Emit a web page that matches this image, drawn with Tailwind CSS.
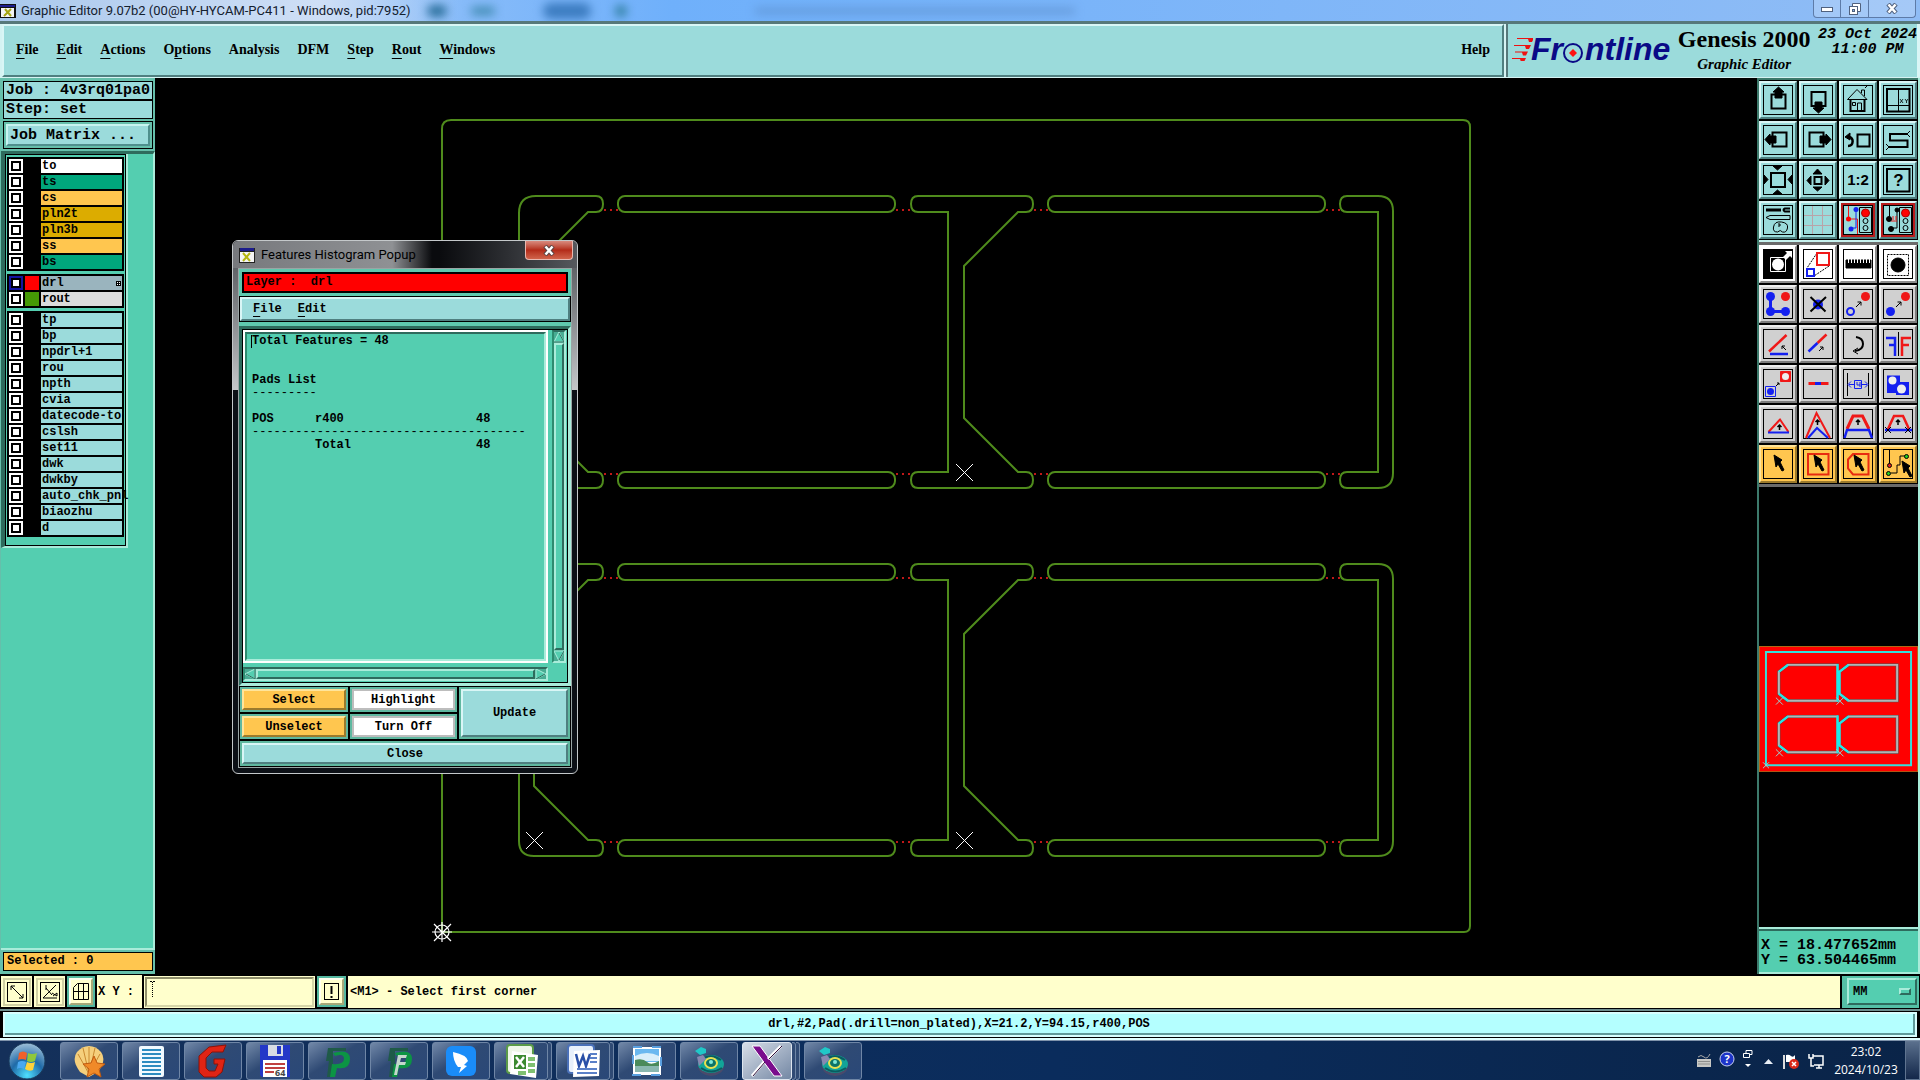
<!DOCTYPE html>
<html lang="en">
<head>
<meta charset="utf-8">
<title>Graphic Editor</title>
<script src="https://cdn.jsdelivr.net/npm/@tailwindcss/browser@4"></script>
</head>
<body class="flex h-screen min-h-[700px] flex-col overflow-hidden bg-black font-['Liberation_Mono',monospace] font-bold text-black">

<!-- Window title -->
<header class="flex h-[21px] shrink-0 items-center justify-between overflow-hidden bg-linear-to-r from-[#b9d2f2] via-[#6fb0fb] via-35% to-[#8fbcf5] pr-1">
  <div class="flex h-full items-center gap-[5px] bg-linear-to-r from-[#a9c8ec] via-[#cfdff6] via-70% to-transparent pr-12">
    <svg class="h-4 w-4" viewBox="0 0 16 16"><rect x="0" y="1" width="16" height="14" fill="#111"/><rect x="0" y="2" width="15" height="2" fill="#1c1c8c"/><rect x="1" y="5" width="13" height="9" fill="#f4f4f4"/><path d="M5 6l6 7M11 6l-7 7" stroke="#a5a512" stroke-width="2"/></svg>
    <h1 class="whitespace-nowrap font-['Roboto',sans-serif] text-[13px] font-normal leading-[20px] text-[#14202e]">Graphic Editor 9.07b2 (00@HY-HYCAM-PC411 - Windows, pid:7952)</h1>
  </div>
  <!-- Desktop showing through the glass -->
  <div class="-ml-8 flex h-full flex-1 items-center blur-[5px]">
    <span class="h-3 w-5 rounded-full bg-[#2a6f9c]"></span><span class="ml-6 h-2 w-6 rounded-full bg-[#3f8ab0]"></span><span class="ml-12 h-4 w-12 rounded-full bg-[#3c7cc0]"></span><span class="ml-6 h-3 w-3 rounded-full bg-[#2f7fa0]"></span><span class="ml-32 h-1 w-80 rounded-full bg-[#5a8cc8]"></span>
  </div>
  <div class="flex h-full items-start">
    <button aria-label="Minimize" class="flex h-[18px] w-7 items-center justify-center rounded-bl border border-t-0 border-[#5d7ba8] bg-white/20"><svg width="12" height="6"><rect x=".5" y="1.500" width="11" height="4" fill="#fff" stroke="#50617e"/></svg></button>
    <button aria-label="Restore" class="flex h-[18px] w-7 items-center justify-center border border-l-0 border-t-0 border-[#5d7ba8] bg-white/20"><svg width="12" height="12"><path d="M3.500 3V.500h8v8H9" fill="#fff" stroke="#50617e"/><rect x=".5" y="3.500" width="8" height="8" fill="#fff" stroke="#50617e"/><rect x="3.500" y="6.500" width="2" height="2" fill="#8fb5ea" stroke="#50617e"/></svg></button>
    <button aria-label="Close" class="flex h-[18px] w-[47px] items-center justify-center rounded-br border border-l-0 border-t-0 border-[#5d7ba8] bg-white/20"><svg width="12" height="11"><path d="M2 1l8 9M10 1l-8 9" stroke="#50617e" stroke-width="4.500"/><path d="M2.500 1.500l7 8M9.500 1.500l-7 8" stroke="#fff" stroke-width="2.500"/></svg></button>
  </div>
</header>

<!-- Menu bar and brand -->
<div class="flex h-[57px] shrink-0 border-t-[3px] border-[#56787a] bg-[#d5f3f3] pb-px">
  <nav class="ml-[2px] flex flex-1 items-center gap-[18px] border-2 border-b-[#4f7f80] border-l-[#d9f6f6] border-r-[#4f7f80] border-t-[#d9f6f6] bg-[#9bdbdb] px-3 pb-[2px] font-['Liberation_Serif',serif] text-[14px]">
    <button><span class="underline underline-offset-4">F</span>ile</button>
    <button><span class="underline underline-offset-4">E</span>dit</button>
    <button><span class="underline underline-offset-4">A</span>ctions</button>
    <button>O<span class="underline underline-offset-4">p</span>tions</button>
    <button>Analysis</button>
    <button>DFM</button>
    <button><span class="underline underline-offset-4">S</span>tep</button>
    <button><span class="underline underline-offset-4">R</span>out</button>
    <button><span class="underline underline-offset-4">W</span>indows</button>
    <button class="ml-auto">Help</button>
  </nav>
  <div class="ml-[2px] flex w-[414px] border-l-2 border-r-[3px] border-l-[#56787a] border-r-[#d9f6f6] bg-[#9bdbdb] pl-1">
    <div class="flex shrink-0 items-center pb-[3px] font-['Liberation_Sans',sans-serif] text-[32px] italic leading-[50px] text-[#0a0a86]">
      <svg class="h-6 w-[21px]" viewBox="0 0 21 24"><path d="M5 1h17l-2 4h-3l-1-3H5zM2 8h17l-2 4h-3l-1-3H2zM3 14.500h13l-2 4h-3l-1-3H3zM0 21h14l-2 4h-3l-1-3H0z" fill="#ee1111"/></svg><span class="-ml-[2px]">Fr</span>
      <svg class="mt-2 h-6 w-[22px]" viewBox="0 0 22 24"><circle cx="10" cy="12" r="9" fill="none" stroke="#0a0a86" stroke-width="2"/><path d="M10 8l4 4-4 4-4-4z" fill="#f11"/></svg><span>ntline</span>
    </div>
    <div class="flex flex-1 flex-col items-center whitespace-nowrap font-['Liberation_Serif',serif]">
      <div class="text-[24px] leading-[30px]">Genesis 2000</div>
      <div class="text-[15px] italic leading-[20px]">Graphic Editor</div>
    </div>
    <div class="flex shrink-0 flex-col items-center whitespace-nowrap pt-[3px] text-[15px] italic leading-[15px]"><span>23 Oct 2024</span><span>11:00 PM</span></div>
  </div>
</div>

<main class="flex min-h-0 flex-1">
  <!-- Layers -->
  <aside class="flex w-[155px] shrink-0 flex-col bg-[#66bfab] pl-px text-[12px]">
    <div class="px-[2px] pt-[3px] text-[15px]">
      <div class="h-[19px] whitespace-nowrap border border-black bg-[#9bdbdb] pl-[2px] leading-[18px]">Job : 4v3rq01pa0</div>
      <div class="h-[19px] border border-black bg-[#9bdbdb] pl-[2px] leading-[18px]">Step: set</div>
      <div class="mt-[2px] border border-black p-[2px]"><button class="block h-[22px] w-full border-2 border-b-[#4f8f8d] border-l-[#c8f4f0] border-r-[#4f8f8d] border-t-[#c8f4f0] bg-[#9bdbdb] pl-[2px] text-left leading-[17px]">Job Matrix ...</button></div>
    </div>
    <div class="mt-[2px] flex flex-1 items-start border-b-2 border-r-2 border-t-[3px] border-b-[#a9ecda] border-r-[#a9ecda] border-t-[#2e6b5d] bg-[#54ceb0]">
      <div class="border-b-2 border-l-[4px] border-r-2 border-b-[#a9ecda] border-l-[#2e6b5d] border-r-[#a9ecda]">
        <div id="layers" class="flex h-[392px] w-[121px] flex-col gap-[3px] border border-black bg-[#54ceb0] p-px pt-[2px]"></div>
      </div>
    </div>
    <div class="px-[2px] pb-[3px] pt-[2px]"><output class="block h-[19px] border border-black bg-[#ffc64f] pl-[3px] leading-[17px]">Selected : 0</output></div>
  </aside>

  <!-- Board view -->
  <section class="relative min-w-0 flex-1 bg-black">
    <svg id="board" class="absolute inset-0 h-full w-full" viewBox="155 78 1602 896" fill="none" stroke="#4f8b1c" stroke-width="2" shape-rendering="geometricPrecision">
      <path d="M442 932V129Q442 120 451 120H1463Q1470 120 1470 127V926Q1470 932 1464 932Z"/>
      <defs>
        <g id="panel">
          <path d="M588 212H596Q603 212 603 204T596 196H536Q519 196 519 213V473Q519 488 534 488H596Q603 488 603 480T596 472H588L534 418V266Z"/>
          <rect x="618" y="196" width="277" height="16" rx="7"/><rect x="618" y="472" width="277" height="16" rx="7"/>
          <rect x="1048" y="196" width="277" height="16" rx="7"/><rect x="1048" y="472" width="277" height="16" rx="7"/>
          <path d="M948 212H918Q911 212 911 204T918 196H1026Q1033 196 1033 204T1026 212H1018L964 266V418L1018 472H1026Q1033 472 1033 480T1026 488H918Q911 488 911 480T918 472H948Z"/>
          <path d="M1378 212H1347Q1340 212 1340 204T1347 196H1378Q1393 196 1393 211V473Q1393 488 1378 488H1347Q1340 488 1340 480T1347 472H1378Z"/>
          <path stroke="#c01818" stroke-dasharray="2 4" d="M604 210h14M896 210h14M1034 210h14M1326 210h14M604 474h14M896 474h14M1034 474h14M1326 474h14"/>
          <path stroke="#fff" stroke-width="1" d="M526 464l17 17M543 464l-17 17M956 464l17 17M973 464l-17 17"/>
        </g>
      </defs>
      <use href="#panel"/><use href="#panel" y="368"/>
      <g stroke="#fff" stroke-width="1.200"><circle cx="442" cy="932" r="7"/><path d="M432 932h20M442 922v20M434 924l17 17M451 924l-17 17"/></g>
    </svg>

    <!-- Features histogram window -->
    <div class="absolute left-[77px] top-[162px] w-[346px] rounded-[6px] border border-[#c4c8ca] bg-linear-to-b from-[#4c4f54] via-[#c4c6c8] via-28% to-[#0c1016] to-28% px-[5px] pb-[5px] text-[12px]">
      <div class="-mx-[5px] flex h-[27px] items-start rounded-t-[5px] bg-linear-to-r from-[#0a0b0e] via-[#0a0b0e] via-60% to-[#56595e] pr-1">
        <div class="flex h-full items-start rounded-tl-[5px] bg-linear-to-r from-[#77797d] via-[#8f9194] via-80% to-transparent pl-[6px] pr-4">
          <svg class="mt-[7px] h-[15px] w-4" viewBox="0 0 16 15"><rect width="16" height="15" fill="#222"/><rect x="1" width="14" height="3" fill="#1c1c8c"/><rect x="1" y="4" width="14" height="10" fill="#f4f4f4"/><path d="M4 5l7 8M11 5l-7 8" stroke="#b5b512" stroke-width="2"/></svg>
          <h2 class="ml-[6px] mt-[4px] font-['Roboto',sans-serif] text-[13px] font-normal leading-[20px]">Features Histogram Popup</h2>
        </div>
        <button aria-label="Close window" class="ml-auto flex h-[19px] w-[48px] items-center justify-center rounded-b-[4px] border border-t-0 border-[#e8b8b0] bg-linear-to-b from-[#d88a7e] via-[#b32a18] via-50% to-[#d0624a]"><svg width="12" height="11"><path d="M2 1l8 9M10 1l-8 9" stroke="#5a4444" stroke-width="4.500"/><path d="M2.500 1.500l7 8M9.500 1.500l-7 8" stroke="#fff" stroke-width="2.500"/></svg></button>
      </div>
      <div class="border border-[#9aa5a5] bg-black">
        <div class="bg-[#5fc8ae] p-[3px]"><div class="h-[21px] whitespace-pre border-2 border-black bg-[#ff0000] pl-[2px] leading-[17px]">Layer :  drl</div></div>
        <nav class="border border-black"><div class="flex h-6 items-center gap-4 border-2 border-b-[#4f7f80] border-l-[#d9f6f6] border-r-[#4f7f80] border-t-[#d9f6f6] bg-[#9bdbdb] px-[11px]"><button><span class="underline underline-offset-4">F</span>ile</button><button><span class="underline underline-offset-4">E</span>dit</button></div></nav>
        <div class="border-t-[4px] border-[#5fc8ae]">
        <div class="border-[3px] border-b-[#a9ecda] border-l-[#2e6b5d] border-r-[#a9ecda] border-t-[#2e6b5d]">
          <div class="grid grid-cols-[1fr_14px] gap-x-1 gap-y-1 border border-black bg-[#54ceb0] pr-px pb-px">
            <div class="h-[333px] border-2 border-white"><div class="h-full border-2 border-b-[#a9ecda] border-l-[#2e8b70] border-r-[#a9ecda] border-t-[#2e6b5d] pl-[5px] pt-px leading-[13px]">
              <div class="-ml-px border-l border-black">Total Features = 48</div>
              <h3 class="mt-[26px] text-[12px] font-bold">Pads List</h3>
              <div class="font-normal">---------</div>
              <table class="mt-[13px] table-fixed border-collapse">
                <colgroup><col class="w-[63px]"><col class="w-[161px]"><col class="w-[60px]"></colgroup>
                <tbody><tr><td>POS</td><td>r400</td><td>48</td></tr>
                <tr><td colspan="3" class="font-normal">--------------------------------------</td></tr>
                <tr><td></td><td>Total</td><td>48</td></tr></tbody>
              </table>
            </div></div>
            <div class="flex flex-col border-2 border-b-[#a9ecda] border-l-[#2e8b70] border-r-[#a9ecda] border-t-[#2e6b5d] bg-[#48ac93]">
              <svg class="h-[11px] w-[10px]" viewBox="0 0 10 11"><path d="M5 0L0 10h10z" fill="#54ceb0" stroke="#a9ecda"/><path d="M0 10h10L5 1" fill="none" stroke="#2e6b5d"/></svg>
              <div class="flex-1 border-2 border-b-[#2e6b5d] border-l-[#a9ecda] border-r-[#2e6b5d] border-t-[#a9ecda] bg-[#54ceb0]"></div>
              <svg class="h-[11px] w-[10px]" viewBox="0 0 10 11"><path d="M5 11L0 1h10z" fill="#54ceb0" stroke="#a9ecda"/><path d="M10 1L5 10" fill="none" stroke="#2e6b5d"/></svg>
            </div>
            <div class="flex h-[14px] border-2 border-b-[#a9ecda] border-l-[#2e8b70] border-r-[#a9ecda] border-t-[#2e6b5d] bg-[#48ac93]">
              <svg class="h-[10px] w-[11px]" viewBox="0 0 11 10"><path d="M0 5L10 0v10z" fill="#54ceb0" stroke="#a9ecda"/><path d="M10 0v10L1 5" fill="none" stroke="#2e6b5d"/></svg>
              <div class="flex-1 border-2 border-b-[#2e6b5d] border-l-[#a9ecda] border-r-[#2e6b5d] border-t-[#a9ecda] bg-[#54ceb0]"></div>
              <svg class="h-[10px] w-[11px]" viewBox="0 0 11 10"><path d="M11 5L1 0v10z" fill="#54ceb0" stroke="#a9ecda"/><path d="M1 10l9-5" fill="none" stroke="#2e6b5d"/></svg>
            </div>
          </div>
        </div>
        </div>
        <div class="grid grid-cols-[108px_107px_1fr] gap-[2px] border border-black leading-[18px]">
          <div class="bg-[#5fb8a0] p-[2px]"><button class="block h-[21px] w-full border-2 border-b-[#9c7a2c] border-l-[#ffe49a] border-r-[#9c7a2c] border-t-[#ffe49a] bg-[#ffc64f]">Select</button></div>
          <div class="bg-[#5fb8a0] p-[2px]"><button class="block h-[21px] w-full border-2 border-[#bdbdbd] bg-white">Highlight</button></div>
          <div class="row-span-2 bg-[#5fb8a0] p-[2px]"><button class="block h-full w-full border-2 border-b-[#4f7f80] border-l-[#d9f6f6] border-r-[#4f7f80] border-t-[#d9f6f6] bg-[#9bdbdb]">Update</button></div>
          <div class="bg-[#5fb8a0] p-[2px]"><button class="block h-[21px] w-full border-2 border-b-[#9c7a2c] border-l-[#ffe49a] border-r-[#9c7a2c] border-t-[#ffe49a] bg-[#ffc64f]">Unselect</button></div>
          <div class="bg-[#5fb8a0] p-[2px]"><button class="block h-[21px] w-full border-2 border-[#bdbdbd] bg-white">Turn Off</button></div>
          <div class="col-span-3 bg-[#5fb8a0] p-[2px]"><button class="block h-[21px] w-full border-2 border-b-[#4f7f80] border-l-[#d9f6f6] border-r-[#4f7f80] border-t-[#d9f6f6] bg-[#9bdbdb]">Close</button></div>
        </div>
      </div>
    </div>
  </section>

  <!-- Tools -->
  <aside class="flex w-[163px] shrink-0 flex-col border-l-2 border-r-2 border-l-[#3d7a6c] border-r-[#a9ecda]">
    <div class="border-b-2 border-t-2 border-b-[#c6f2ee] border-t-[#3d7a6c] pb-px"><div id="view-tools" class="grid grid-cols-[repeat(4,38px)] gap-[2px] pt-px"></div></div>
    <div class="border-b-[3px] border-t-[3px] border-[#6b6b6b] pb-px"><div id="edit-tools" class="grid grid-cols-[repeat(4,38px)] gap-[2px]"></div></div>
    <div class="flex flex-1 items-center border-b-2 border-[#a9ecda] bg-black">
      <svg class="-mb-[4px] w-full" viewBox="0 0 160 127" fill="none">
        <rect x=".5" y=".5" width="159" height="126" fill="#f00" stroke="#b06a18"/>
        <path d="M7 6h146v114H7z" stroke="#35e0dc" stroke-width="2"/>
        <defs><g id="mini"><path d="M29 19h50v36H29l-9-7V26zM90 19h49v36H90l-9-7V26z" stroke="#4a5a5a" stroke-width="3"/><path d="M29 19h50v36H29l-9-7V26zM90 19h49v36H90l-9-7V26z" stroke="#b4b4b4" stroke-width="2"/><path d="M79 18v38M81 25v24M20 26l9-7M81 26l9-7M20 48l9 7M81 48l9 7" stroke="#20e8e8" stroke-width="2"/><path d="M17 52l7 7M24 52l-7 7M78 52l7 7M85 52l-7 7" stroke="#9ad0d0"/></g></defs>
        <use href="#mini"/><use href="#mini" y="52"/><path d="M4 117l6 6M10 117l-6 6" stroke="#9ad0d0"/>
      </svg>
    </div>
    <div class="flex h-[45px] flex-col justify-center whitespace-pre border-b-2 border-t-2 border-b-[#a9ecda] border-t-[#2e6b5d] bg-[#54ceb0] pl-[2px] pt-[2px] text-[15px] leading-[15px]"><span>X = 18.477652mm</span><span>Y = 63.504465mm</span></div>
  </aside>
</main>

<!-- Command line -->
<div class="flex h-[35px] shrink-0 items-center gap-[2px] px-px text-[12px]">
  <button aria-label="Absolute" class="flex h-[31px] w-[31px] items-center justify-center bg-[#ffffcc]"><svg class="border-2 border-[#d0d0a4]" width="28" height="28" viewBox="0 0 24 24" fill="none" stroke="#000"><rect x="2.500" y="2.500" width="19" height="19"/><path d="M6 6l12 12M6 10V6h4M18 14v4h-4"/></svg></button>
  <button aria-label="Angle" class="flex h-[31px] w-[31px] items-center justify-center bg-[#ffffcc]"><svg class="border-2 border-[#d0d0a4]" width="28" height="28" viewBox="0 0 24 24" fill="none" stroke="#000"><rect x="2.500" y="2.500" width="19" height="19"/><path d="M5 18L18 5M5 18h14M8 8l6 7M8 5v5M14 13l5 3v-3l-4 3"/></svg></button>
  <button aria-label="Snap grid" class="flex h-[31px] w-[28px] items-center justify-center bg-[#54b8a0]"><svg class="border-2 border-b-[#a8a878] border-l-[#fffff0] border-r-[#a8a878] border-t-[#fffff0] bg-[#ffffcc]" width="24" height="27" viewBox="0 0 20 23" fill="none" stroke="#000"><path d="M2.500 7.500l4-4h11v16h-15zM2 11.500h16M7.500 3v16M12.500 3v16"/></svg></button>
  <label for="xy" class="flex h-[33px] w-[45px] items-center whitespace-nowrap bg-[#ffffcc] pl-px">X Y :</label>
  <div class="relative h-[32px] w-[171px] bg-[#ffffcc] p-px">
    <input id="xy" class="h-full w-full border-2 border-b-[#d6d6a8] border-l-[#8e8e6a] border-r-[#d6d6a8] border-t-[#8e8e6a] bg-[#ffffcc] px-1">
    <svg class="absolute left-[6px] top-[5px]" width="5" height="16" fill="none" stroke="#000"><path d="M2.500 1v15" stroke-dasharray="1 1"/><path d="M0 .5h2M3 .5h2"/></svg>
  </div>
  <button aria-label="Alert" class="flex h-[31px] w-[29px] items-center justify-center bg-[#54b8a0]"><svg class="border-2 border-b-[#a8a878] border-l-[#fffff0] border-r-[#a8a878] border-t-[#fffff0] bg-[#ffffcc]" width="25" height="27" viewBox="0 0 21 23" fill="none" stroke="#000"><rect x="3.500" y="3.500" width="14" height="16"/><path d="M10.500 6v8M10.500 16v2" stroke-width="2"/></svg></button>
  <output class="flex h-[32px] flex-1 items-center bg-[#ffffcc] pl-[2px]">&lt;M1&gt; - Select first corner</output>
  <div class="flex h-[32px] w-[77px] items-center bg-[#54c0a6] pl-[5px]">
    <button aria-haspopup="listbox" class="flex h-[27px] w-[70px] items-center justify-between border-2 border-b-[#2e6b5d] border-l-[#a9ecda] border-r-[#2e6b5d] border-t-[#a9ecda] bg-[#54ceb0] pl-1 pr-1">MM<span class="h-[7px] w-3 border-2 border-b-[#2e6b5d] border-l-[#a9ecda] border-r-[#2e6b5d] border-t-[#a9ecda]"></span></button>
  </div>
</div>
<div class="h-[31px] shrink-0 border-b-2 border-t-2 border-b-[#e0ffff] border-t-[#6f8f8f] px-[2px]">
  <div class="h-full border border-black bg-[#d8ffff] p-[2px]"><output class="flex h-full items-center justify-center border-b-2 border-r-2 border-[#5f9a9a] bg-[#b4ffff] pt-px text-[12px] leading-none">drl,#2,Pad(.drill=non_plated),X=21.2,Y=94.15,r400,POS</output></div>
</div>

<!-- Taskbar -->
<footer class="flex h-[40px] shrink-0 items-center border-t border-[#7f93ab] bg-linear-to-r from-[#14305a] via-[#0a2c5c] via-55% to-[#0a2448] font-['Open_Sans',sans-serif] font-normal text-white">
  <button aria-label="Start" class="ml-[8px] mr-[14px] shrink-0"><svg width="38" height="38" viewBox="0 0 38 38"><defs><radialGradient id="orb" cx=".5" cy=".9" r=".9"><stop offset="0" stop-color="#4fe0ff"/><stop offset=".5" stop-color="#1f6aa8"/><stop offset="1" stop-color="#9fc0d8"/></radialGradient></defs><circle cx="19" cy="19" r="18" fill="url(#orb)" stroke="#1a3a5a"/><path d="M11 11q4-3 8 0l-1 7q-4-2-8 0z" fill="#f0602a"/><path d="M20 11q4 2 9 0l-2 8q-4 2-8 0z" fill="#8fc83a"/><path d="M10 20q4-2 8 0l-2 7q-4-2-7 0z" fill="#4aa8f0"/><path d="M19 20q4 2 8 0l-2 8q-4 2-8-1z" fill="#ffd23a"/></svg></button>
  <div id="tasks" class="flex gap-1"></div>
  <div class="ml-auto flex items-center gap-[7px]">
    <svg width="16" height="16" viewBox="0 0 16 16"><rect x="1" y="6" width="14" height="8" fill="#c8c8c4"/><path d="M2.500 8.500h11M2.500 11h11" stroke="#555" stroke-dasharray="1 1"/><path d="M2 4q3-3 6 0t6-3" stroke="#aaa" fill="none"/></svg>
    <svg class="-mt-1" width="16" height="16" viewBox="0 0 16 16"><circle cx="8" cy="8" r="7" fill="#1c34c8" stroke="#c8d0f0"/><text x="8" y="12" text-anchor="middle" font-size="11" font-weight="700" fill="#fff">?</text></svg>
    <svg class="-mt-1" width="12" height="20" viewBox="0 0 12 20" fill="none" stroke="#fff"><path d="M4 4V1.500h6v4H8M1.500 4.500h6v4h-6z"/><path d="M3 15h6l-3 3z" fill="#fff" stroke="none"/></svg>
    <svg width="14" height="16" viewBox="-1 0 14 16"><path d="M2 11h9L6.500 6z" fill="#e8eef6"/></svg>
    <svg width="18" height="18" viewBox="0 0 18 18"><path d="M2 3v14" stroke="#ddd" stroke-width="2"/><path d="M4 3q3-1 5 1t4-1v7H4z" fill="#fff"/><circle cx="12" cy="12" r="5" fill="#d82818"/><path d="M10 10l4 4M14 10l-4 4" stroke="#fff" stroke-width="1.500"/></svg>
    <svg width="18" height="18" viewBox="0 0 18 18" fill="none" stroke="#fff" stroke-width="1.500"><path d="M6 4h10v9H7M9 16h6M12 13v3M2 2v4h4V2M4 6v8h3"/></svg>
    <div class="flex w-[68px] flex-col items-center whitespace-nowrap text-[12px] leading-[18px]"><span>23:02</span><span>2024/10/23</span></div>
    <button aria-label="Show desktop" class="-ml-[2px] h-[39px] w-[15px] border border-[#5f7490] bg-linear-to-b from-[#5a6f8c] to-[#14284a]"></button>
  </div>
</footer>

<script>
// Layer groups: [name, label colour class, swatch colour class, checkbox colour class]
const W = 'bg-white', G = 'bg-[#00a67c]', O = 'bg-[#ffc64f]', D = 'bg-[#dcac00]', C = 'bg-[#9bdbdb]', K = 'bg-black';
const groups = [
  [['to', W], ['ts', G], ['cs', O], ['pln2t', D], ['pln3b', D], ['ss', O], ['bs', G]],
  [['drl', 'bg-[#9ab4be]', 'bg-[#ff0000]', 'bg-[#1414a0]'], ['rout', 'bg-[#dcdcdc]', 'bg-[#459a05]']],
  ['tp', 'bp', 'npdrl+1', 'rou', 'npth', 'cvia', 'datecode-to', 'cslsh', 'set11', 'dwk', 'dwkby', 'auto_chk_pnl', 'biaozhu', 'd'].map(n => [n, C])
];
document.getElementById('layers').innerHTML = groups.map(g =>
  '<div class="flex flex-col gap-[2px] bg-black p-[2px]">' + g.map(([n, c, s = K, b = W]) =>
    `<div class="flex h-[14px] gap-[2px]">
      <label class="flex w-[14px] shrink-0 items-center justify-center ${b}"><input type="checkbox" aria-label="${n}" class="h-[10px] w-[10px] appearance-none border-2 border-black bg-white"></label>
      <span class="w-[14px] shrink-0 ${s}"></span>
      <button class="flex min-w-0 flex-1 items-center whitespace-nowrap pl-px leading-[14px] ${c}">${n}${n === 'drl' ? '<svg class="ml-auto mr-px" width="5" height="5" shape-rendering="crispEdges"><path d="M0 0h5v5H0z"/><path d="M1 1h1v1H1zM3 1h1v1H3zM1 3h1v1H1zM3 3h1v1H3z" fill="#fff"/></svg>' : ''}</button>
    </div>`).join('') + '</div>').join('');

// Tool icons, drawn in a 30 x 30 frame
const R = '#f01818', B = '#1420f0';
const cursor = (x, y) => `<path transform="translate(${x} ${y})" d="M0 0l8 5-2 2 4 8-2 1-4-7-2 3z" fill="#000"/>`;
const light = '<path d="M16.500 2.500h12v25h-12z"/><circle cx="22.500" cy="8" r="4" fill="#f00" stroke="#a00"/><circle cx="22.500" cy="16" r="2.500"/><circle cx="22.500" cy="23" r="2.500"/>';
const ne = (x, y) => `<path d="M${x} ${y}l5-5m-3.500 0h3.500v3.500"/>`;
const up = (x, y) => `<path d="M${x} ${y}v-5m-2 2l2-2 2 2" stroke-width="1.500"/>`;
const view = [
  ['Pan up', '<path d="M8.500 9.500h14v14h-14z" stroke-width="2"/><path d="M15.500 2l5.500 5h-2v6h-7V7h-2z" fill="#000"/>'],
  ['Pan down', '<path d="M8.500 7h14v14h-14z" stroke-width="2"/><path d="M15.500 28l5.500-5h-2v-6h-7v6h-2z" fill="#000"/>'],
  ['Home', '<path d="M7.500 14v12h14V14" stroke-width="2"/><path d="M4.500 14.500L14 4.500l10 10zM9.500 17.500h3v3h-3zM14.500 26v-8h4v8M18.500 8V5h3v6M22 3l2-2"/>'],
  ['Window XY', '<path d="M4 4h22.500v22.500H4z" stroke-width="2"/><path d="M15.500 4v22M4 20.500h22"/><path d="M17 14l3 4M20 14l-3 4M22 14l1.500 2 1.500-2M23.500 16v2" stroke-width=".8"/>'],
  ['Pan left', '<path d="M9.500 7.500h14v14h-14z" stroke-width="2"/><path d="M2 14.500l5-5.500v2h6v7H7v2z" fill="#000"/>'],
  ['Pan right', '<path d="M6.500 7.500h14v14h-14z" stroke-width="2"/><path d="M28 14.500L23 9v2h-6v7h6v2z" fill="#000"/>'],
  ['Previous view', '<path d="M14.500 9.500h12v12h-12z" stroke-width="2"/><path d="M5 21c6 0 6-9 1-9" stroke-width="2.500"/><path d="M2 12l5-4v7z" fill="#000"/>'],
  ['Serpentine', '<path d="M24 9H7v6.500h17.500V22H6" stroke-width="2"/><path d="M24 9l3-3M24 9l3 3M6 22l-3-3M6 22l-3 3"/>'],
  ['Zoom in', '<path d="M8 8h14v14H8z" stroke-width="2"/><path d="M10 1h9l-4.500 4zM10 29h9l-4.500-4zM1 10v9l4-4.500zM29 10v9l-4-4.500z" fill="#000"/>'],
  ['Zoom out', '<path d="M11.500 12h7v7h-7z" stroke-width="2"/><path d="M10 9h9l-4.500-5zM10 22h9l-4.500 4zM8 11v9l-4-4.500zM22 11v9l4-4.500z" fill="#000"/>'],
  ['Scale', '<text x="15" y="20" text-anchor="middle" font-size="15" fill="#000" stroke="none" font-family="Liberation Sans, sans-serif" font-weight="700">1:2</text>'],
  ['Query', '<path d="M4 4h22.500v22.500H4z" stroke-width="2"/><text x="15.500" y="21" text-anchor="middle" font-size="17" fill="#000" stroke="none" font-family="Liberation Sans, sans-serif" font-weight="700">?</text>'],
  ['Options', '<path d="M3 5h15" stroke-width="3"/><path d="M27 3.500h-5q-3 1.500 0 3h5" stroke-width="2"/><path d="M3 12.500l4-2h20v4H7zM10.500 22q1-6 8-5t6 6-5 4q-2-3-5 0-5 0-4-5zM15 19h2v2h-2"/>'],
  ['Grid', '<path d="M9.500 1v28M19.500 1v28M1 10.500h28M1 20.500h28" stroke="#b9a3a8"/>'],
  ['Stop shorts', light + `<path d="M5.500 1v13h9v15" stroke="#f01818"/><path d="M13 4v19H9" stroke="#1420f0"/><circle cx="5.500" cy="14" r="2.500" fill="#f00" stroke="none"/><circle cx="13" cy="4.500" r="2.500" fill="#1420f0" stroke="none"/><circle cx="8" cy="24" r="2.500" fill="#1420f0" stroke="none"/>`, 1],
  ['Stop spacing', light + '<path d="M6.500 1v13M14 5v18H8"/><path d="M8 16h6M10 11v4M13 11v4" stroke="#f01818"/><circle cx="6" cy="14" r="2.500" fill="#000"/><circle cx="14" cy="5" r="2" fill="#000"/><circle cx="8" cy="24" r="2.500" fill="#000"/>', 1]
];
const edit = [
  ['Export feature', '<path d="M0 0h30v30H0z" fill="#000"/><path d="M7.500 8.500h15v14h-15zM22 8l5-5" stroke="#fff"/><circle cx="15" cy="15.500" r="6" fill="#fff" stroke="none"/><path d="M20 8l4-4-2-2h7v7l-2-2-4 4z" fill="#fff" stroke="none"/>'],
  ['Resize', `<path d="M14 4L4 19M26 17l-15 10" stroke-dasharray="2 1"/><path d="M14 4h12v12H14z" stroke="${R}" stroke-width="2"/><path d="M4 20h7v7H4z" stroke="${B}" stroke-width="2"/>`],
  ['Measure', '<path d="M3 11h25v8H3z" fill="#000"/><path d="M5.500 10v4M8.500 10v4M11.500 10v4M14.500 10v4M17.500 10v4M20.500 10v4M23.500 10v4M26.500 10v4" stroke="#fff"/>'],
  ['Select feature', '<path d="M4.500 5.500h21v21h-21z" stroke-dasharray="2 1"/><circle cx="15" cy="16" r="7" fill="#000"/>'],
  ['Connect', `<path d="M7.500 7.500v15h15" stroke="${B}" stroke-width="3"/><g fill="${B}" stroke="none"><circle cx="7.500" cy="7.500" r="4.500"/><circle cx="7.500" cy="22.500" r="4.500"/><circle cx="22.500" cy="22.500" r="4.500"/><circle cx="22.500" cy="7.500" r="4.500" fill="${R}"/></g>`],
  ['Delete', `<circle cx="15" cy="15.500" r="5" fill="${B}" stroke="none"/><path d="M7.500 8l15 14.500M23 8L7.500 22.500" stroke-width="2"/>`],
  ['Copy', `<circle cx="7.500" cy="22.500" r="3.500" stroke="${B}" stroke-width="2"/><circle cx="22.500" cy="7.500" r="4.500" fill="${R}" stroke="none"/>` + ne(13, 18)],
  ['Move', `<circle cx="7.500" cy="22.500" r="4.500" fill="${B}" stroke="none"/><circle cx="22.500" cy="7.500" r="4.500" fill="${R}" stroke="none"/>` + ne(13, 18)],
  ['Rotate line', `<path d="M6 22.500L23.500 6" stroke="${R}" stroke-width="2.500"/><path d="M7 25h18" stroke="${B}" stroke-width="2.500"/><path d="M23 21l-4-4m0 3v-3h3"/>`],
  ['Stretch line', `<path d="M14.500 14L23.500 5.500" stroke="${R}" stroke-width="2.500"/><path d="M5.500 22.500l9-8.500" stroke="${B}" stroke-width="2.500"/><path d="M16 22l4-4m-3 0h3v3"/>`],
  ['Rotate', '<path d="M13 8q7 1 7 7t-8 7" stroke-width="2"/><path d="M15 19l-5 3 5 3"/>'],
  ['Mirror', `<path d="M15.500 3v24"/><path d="M12 27V9H3M12 16H6" stroke="${B}" stroke-width="2.500"/><path d="M19 27V9h9M19 16h7" stroke="${R}" stroke-width="2.500"/>`],
  ['Change symbol', `<path d="M17.500 2.500h10v10h-10z" fill="${R}" stroke="${R}"/><circle cx="22.500" cy="7.500" r="3.500" fill="#eee" stroke="none"/><path d="M2.500 17.500h10v10h-10z" stroke="${B}"/><circle cx="7.500" cy="22.500" r="3.500" fill="${B}" stroke="none"/><path d="M13 17l3-3m-2 0h2v2"/>`],
  ['Break line', `<path d="M5.500 14.500h20" stroke="${R}" stroke-width="3"/><path d="M12 14.500h6" stroke="${B}" stroke-width="3"/>`],
  ['Spacing', `<path d="M4.500 4v23M25.500 4v23"/><g stroke="${B}"><path d="M11.500 11.500h7v8h-7zM11 15.500H6m2-3l-3 3 3 3M19 15.500h5m-2-3l3 3-3 3M14 13v3h3m0-3v5"/></g>`],
  ['Merge', `<path d="M4 6.500h13v6.500h9v13H13v-2H4z" fill="${B}" stroke="none"/><circle cx="9.500" cy="11.500" r="4" fill="#eee" stroke="none"/><circle cx="18.500" cy="20" r="4.500" fill="#eee" stroke="none"/>`],
  ['Triangle corner', `<path d="M5.500 23l11.500-12.500L25.500 23" stroke="${R}" stroke-width="2"/><path d="M5 23.500h21" stroke="${B}" stroke-width="2"/>` + up(16.5, 21)],
  ['Peak corner', `<path d="M3 29L13.500 4 27 29" stroke="${R}" stroke-width="2"/><path d="M5 29l9-10 11 10" stroke="${B}" stroke-width="2"/>` + up(14.5, 16)],
  ['Trapezoid', `<path d="M4 20L10 7h9.500L26 20" stroke="${R}" stroke-width="3"/><path d="M1.500 29L4 21h22l3 8" stroke="${B}" stroke-width="2.500"/>` + up(15, 16)],
  ['Flat trapezoid', `<path d="M5 20l6-13h9l6 13" stroke="${R}" stroke-width="2.500"/><path d="M2 21h27" stroke="${B}" stroke-width="2.500"/><path d="M2 18l6 6M8 18l-6 6M22 18l6 6M28 18l-6 6"/>` + up(15, 16)],
  ['Pick', cursor(11, 6)],
  ['Pick in rectangle', '<path d="M5 5h20.500v20.500H5z" stroke="#e82a10" stroke-width="2"/>' + cursor(11, 6)],
  ['Pick in polygon', '<path d="M10 5h15.500v20.500H10l-5-6v-9z" stroke="#e82a10" stroke-width="2"/>' + cursor(11, 6)],
  ['Pick net', '<path d="M6.500 1v15M8 24h6v-8h3V7h7"/><circle cx="6.500" cy="16.500" r="2" fill="#d22"/><circle cx="5.500" cy="24.500" r="2" fill="#2c2"/><circle cx="23.500" cy="7.500" r="2" fill="#2c2"/>' + cursor(19, 12)]
];
const tool = ([name, art, stop], cls) =>
  `<button aria-label="${name}" class="h-[38px] w-[38px] border-2 p-[2px] ${cls}"><svg class="${stop ? 'block bg-[#9bdbdb] outline-2 outline-[#b81c1c]' : 'block'}" width="30" height="30" viewBox="0 0 30 30" fill="none" stroke="#000"><rect x=".5" y=".5" width="29" height="29"/>${art}</svg></button>`;
const teal = 'border-t-[#d9f6f6] border-l-[#d9f6f6] border-b-[#4f7f80] border-r-[#4f7f80] bg-[#9bdbdb]';
const white = 'border-t-white border-l-white border-b-[#8c8c8c] border-r-[#8c8c8c] bg-white';
const grey = 'border-t-[#eeeeee] border-l-[#eeeeee] border-b-[#7c7c7c] border-r-[#7c7c7c] bg-[#d0d0d0]';
const orange = 'border-t-[#ffe49a] border-l-[#ffe49a] border-b-[#9c7a2c] border-r-[#9c7a2c] bg-[#ffc64f]';
document.getElementById('view-tools').innerHTML = view.map(t => tool(t, teal)).join('');
document.getElementById('edit-tools').innerHTML = edit.map((t, i) => tool(t, i < 4 ? white : i < 20 ? grey : orange)).join('');

// Taskbar programs, drawn in a 34 x 34 box: [name, art, active, number of stacked windows behind]
const pIcon = '<path d="M8 4h18v3H13v26H7l2-16H6z" fill="#1f5a48"/><path d="M13 9q17-5 17 6t-13 9l-2 9h-5l2-13q12 1 12-5t-9-3z" fill="#0c9444"/>';
const disc = '<ellipse cx="19" cy="22" rx="13" ry="10" fill="#4a4a6a"/><ellipse cx="19" cy="20" rx="13" ry="9" fill="#12a498"/><path d="M10 15q9-6 19 1M9 24q10 7 21 0" stroke="#0a5c60" stroke-width="2" fill="none"/><ellipse cx="19" cy="19" rx="6" ry="5" fill="#0c7468" stroke="#e8e050" stroke-width="2"/><circle cx="19" cy="18" r="2" fill="#7fe8d8"/><path d="M3 7l6-4 5 2v4l-6 2z" fill="#20c8c8"/><path d="M5 13l6-2 3 4-7 7z" fill="#8888b0"/>';
const tasks = [
  ['Shell', '<path d="M17 33L8 28Q-1 16 5 8q5-6 12-6t12 6q6 8-3 20z" fill="#f5cf7c"/><path d="M17 30L6 10M17 30L11 4M17 30V3M17 30l6-26M17 30L28 10" stroke="#c98a30"/><path d="M22 12l3 7 8 1-6 5 2 8-7-4-7 4 2-8-6-5 8-1z" fill="#f08a28" stroke="#c05a10"/>'],
  ['Notepad', '<rect x="5" y="2" width="25" height="31" rx="2" fill="#f2faff"/><path d="M8 6h19M8 10h19M8 14h19M8 18h19M8 22h19M8 26h19M8 30h19" stroke="#2d8cc0" stroke-width="2"/>'],
  ['G tool', '<path d="M30 1l-3 7H16l-6 6v10l3 3h6l3-7h-4v-5h11l-3 13-6 5H8l-5-5V12L13 3z" fill="#e02414" stroke="#8c1208"/>'],
  ['Save', '<path d="M2 1h30v32H4l-2-2z" fill="#2438c8"/><path d="M10 1h15v11H10z" fill="#d8dce4"/><path d="M19 2h4v8h-4z" fill="#2438c8"/><path d="M5 16h24v17H5z" fill="#fff"/><path d="M7 20h20M7 24h20M7 28h9" stroke="#c04040" stroke-width="2"/><text x="17" y="32" font-size="9" font-weight="700" fill="#444">64</text>'],
  ['P tool', pIcon], ['P tool 2', pIcon + '<path d="M12 31l4-20h9l-1 3h-5l-1 4h6l-1 3h-6l-2 10z" fill="#c4d8cc"/>'],
  ['Messenger', '<rect x="2" y="2" width="30" height="30" rx="6" fill="#1a8cf8"/><path d="M9 8q14 3 15 9l-4 4 3 1-8 7 2-6h-3q-5-6-5-15z" fill="#fff"/>'],
  ['Spreadsheet', '<rect x="3" y="1" width="26" height="28" rx="3" fill="#eef6e8" stroke="#5a9a48" stroke-width="2"/><path d="M8 7l26 4-2 23-26-4z" fill="#fff"/><path d="M10 11h12v14H10z" fill="#3c8a30"/><path d="M12 13l8 10M20 13l-8 10" stroke="#fff" stroke-width="2.500"/><path d="M24 13h7v4h-7zM24 19h7v4h-7zM24 25h7v4h-7zM14 27h8v4h-8z" fill="#7fc070"/>', 0, 1],
  ['Word processor', '<rect x="2" y="1" width="26" height="28" rx="3" fill="#e8f0fb" stroke="#4a70b8" stroke-width="2"/><path d="M8 7l26-1-1 26-26 1z" fill="#fff"/><path d="M10 10l3 12 4-10 3 10 4-12" fill="none" stroke="#2a50a8" stroke-width="2.500"/><path d="M24 10h7M24 14h7M24 18h7M11 25h20M11 29h20" stroke="#5a80c8" stroke-width="2"/>', 0, 1],
  ['Pictures', '<rect x="3" y="3" width="28" height="28" fill="#fff" stroke="#5aa0e0" stroke-width="2" stroke-dasharray="9 10"/><rect x="5" y="5" width="24" height="13" fill="#6ab8f0"/><path d="M5 12q12-6 24 0v5H5z" fill="#d8eefa"/><path d="M5 16q8-2 12 2t12-1v10H5z" fill="#4a8a5a"/><path d="M5 22h24v6H5z" fill="#8ab8b0"/>'],
  ['Disc tool', disc],
  ['X server', '<path d="M2 2h8l22 30h-8z" fill="#7a0c8c" stroke="#fff"/><path d="M31 2L18 15M14 18L2 32" stroke="#fff" stroke-width="3"/><path d="M32 2L19 15M15 18L3 32" stroke="#301038"/>', 1, 2],
  ['Disc tool 2', disc]
];
const sliver = '<span class="h-[38px] w-1 rounded-r-[3px] border border-l-0 border-[#6f86a6] bg-[#2f4a74]"></span>';
document.getElementById('tasks').innerHTML = tasks.map(([n, a, on, behind = 0]) =>
  `<div class="flex w-[58px]"><button aria-label="${n}" class="flex h-[38px] min-w-0 flex-1 items-center justify-center rounded-[3px] border ${on ? 'border-[#dce4ee] bg-linear-to-br from-[#d8dee8] to-[#7488a4]' : 'border-[#6f86a6] bg-linear-to-br from-[#7288a8] via-[#2f4a74] via-45% to-[#2a4878]'}"><svg width="34" height="34" viewBox="0 0 34 34">${a}</svg></button>${sliver.repeat(behind)}</div>`).join('');
</script>
</body>
</html>
